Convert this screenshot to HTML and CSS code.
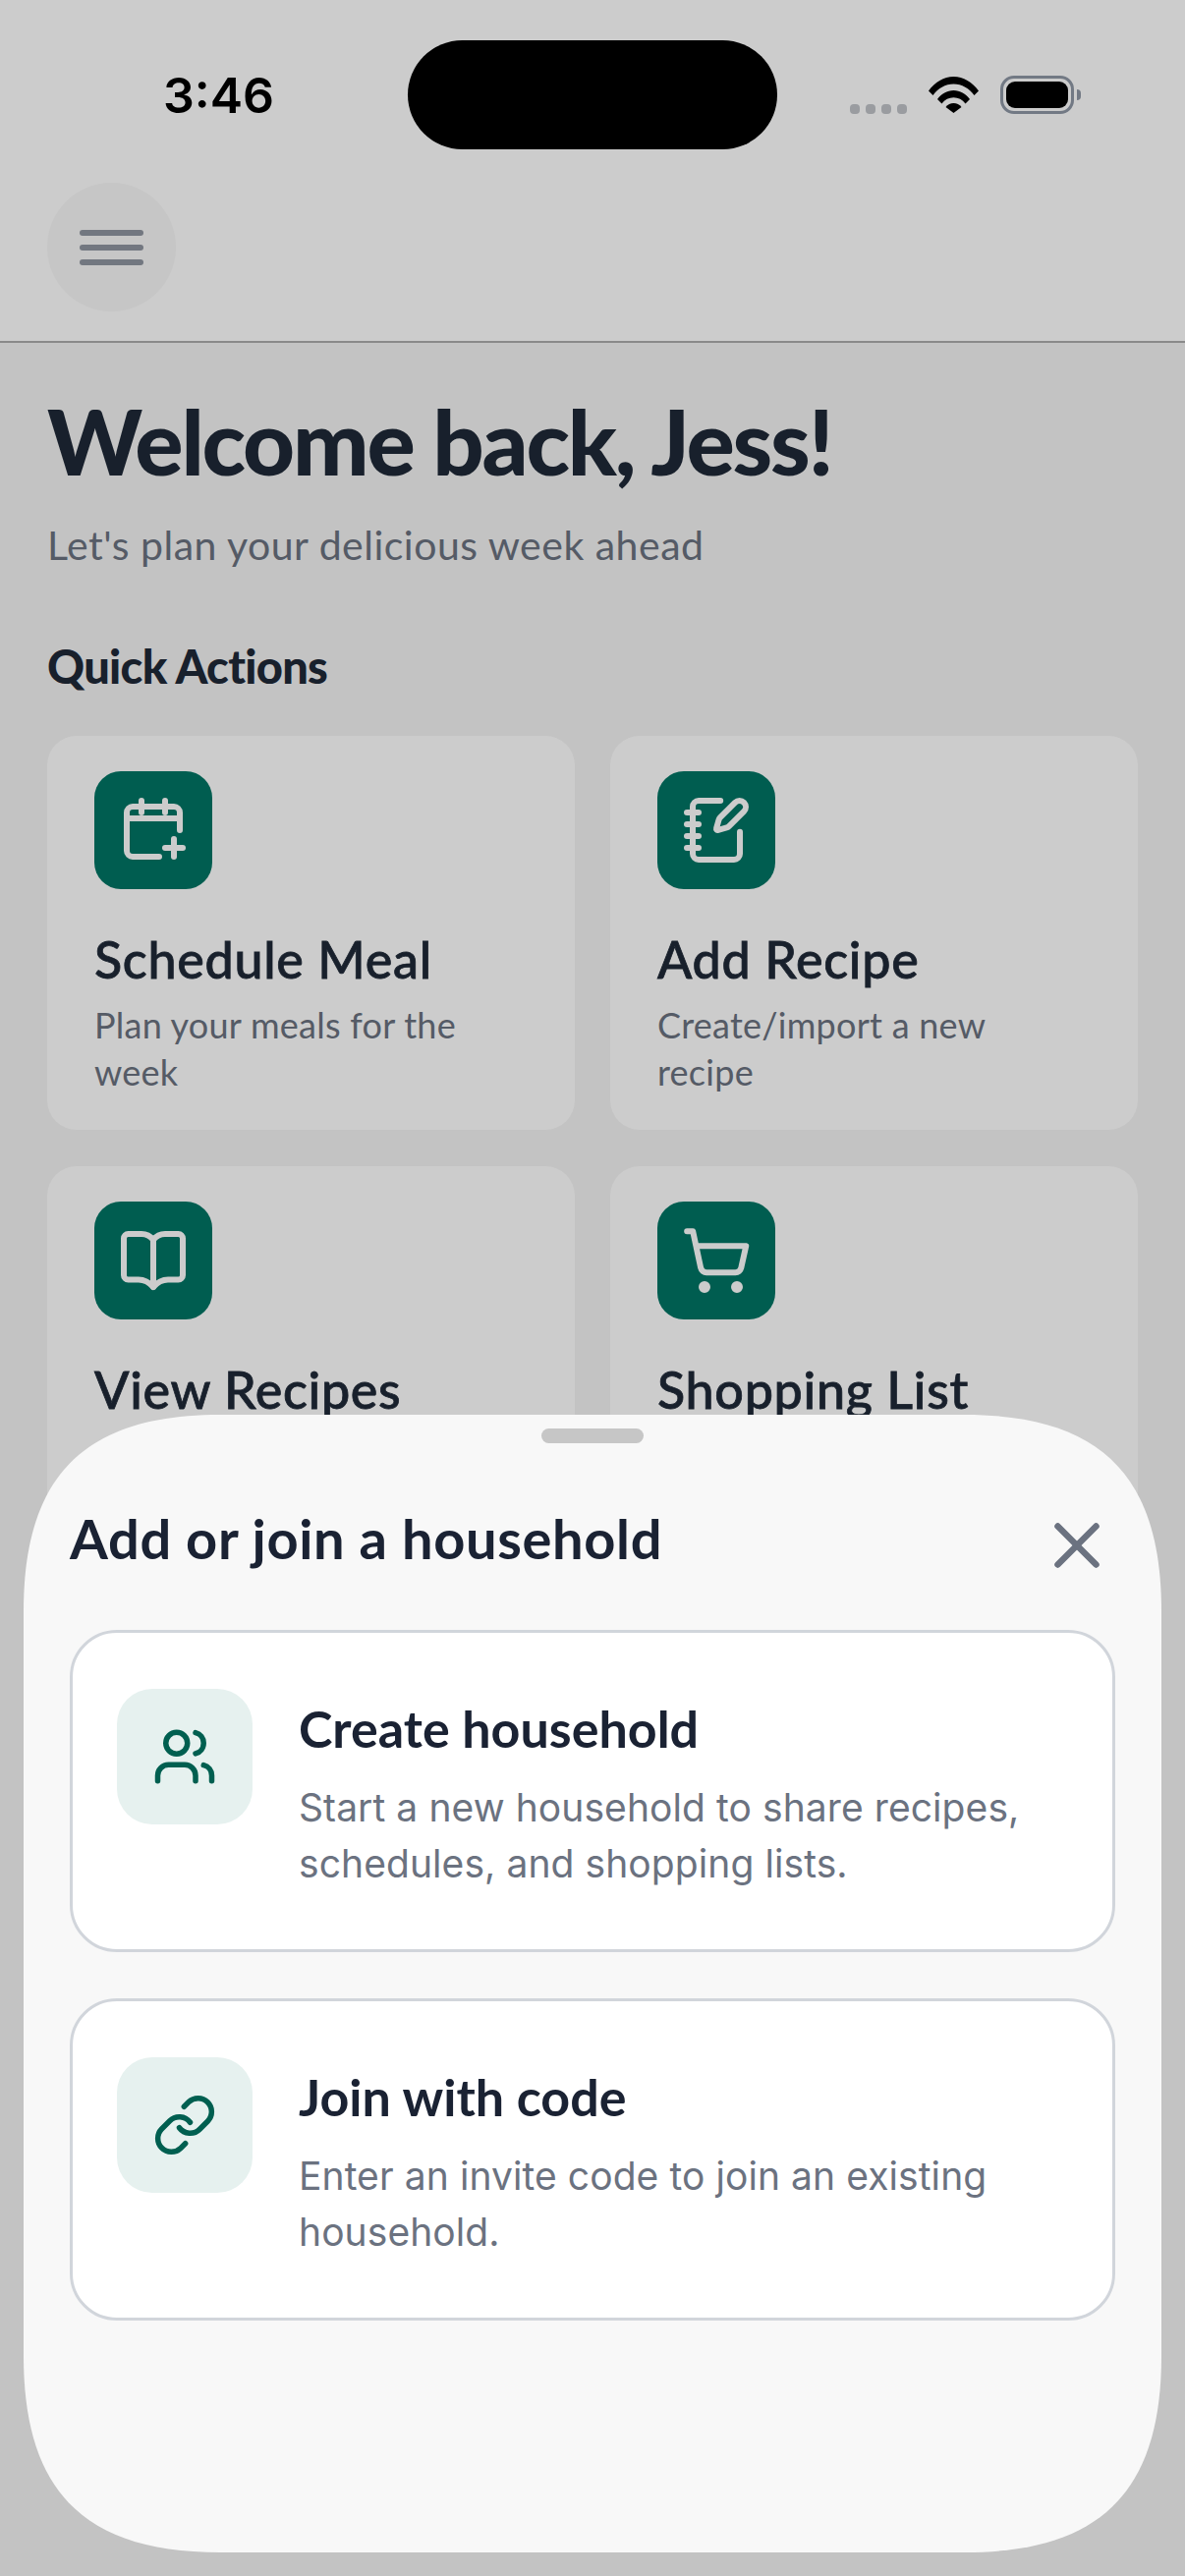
FILE: index.html
```html
<!DOCTYPE html>
<html lang="en">
<head>
  <meta charset="UTF-8" />
  <meta name="viewport" content="width=device-width, initial-scale=1.0"/>
  <title>Welcome back</title>
  <link rel="stylesheet" href="styles.css">
</head>
<body>
  <div class="phone">
    <header class="topbar">
      <div class="statusbar">
        <div class="time">3:46</div>
        <div class="island"></div>
        <div class="status-icons">
          <div class="signal"><span></span><span></span><span></span><span></span></div>
          <svg class="wifi" viewBox="0 0 51 37"><path d="M0 14.500C6.500 5.500 15.500 0 25.500 0S44.500 5.500 51 14.500L46.500 19C41.500 12 34 7.500 25.500 7.500S9.500 12 4.500 19Z"/><path d="M9 23C13 17.500 19 14 25.500 14S38 17.500 42 23L37.500 27.500C34.500 23.500 30.300 21.300 25.500 21.300S16.500 23.500 13.500 27.500Z"/><path d="M17.500 31C19.500 28.500 22.300 27 25.500 27S31.500 28.500 33.500 31L25.500 37Z"/></svg>
          <div class="battery"><div class="battery-fill"></div></div>
          <div class="battery-cap"></div>
        </div>
      </div>
      <button class="menu-btn"><span></span><span></span><span></span></button>
    </header>

    <main class="content">
      <h1>Welcome back, Jess!</h1>
      <p class="subtitle">Let's plan your delicious week ahead</p>
      <h2>Quick Actions</h2>
      <div class="actions">
        <div class="action-card">
          <div class="action-icon">
            <svg class="icon" viewBox="0 0 24 24"><path d="M16 2v4"/><path d="M21 12V6a2 2 0 0 0-2-2H5a2 2 0 0 0-2 2v13a2 2 0 0 0 2 2h9"/><path d="M3 8h18"/><path d="M8 2v4"/><path d="M16 18h6"/><path d="M19 15v6"/></svg>
          </div>
          <div class="action-title">Schedule Meal</div>
          <div class="action-desc">Plan your meals for the week</div>
        </div>
        <div class="action-card">
          <div class="action-icon">
            <svg class="icon" viewBox="0 0 24 24"><path d="M13.400 2H6a2 2 0 0 0-2 2v16a2 2 0 0 0 2 2h12a2 2 0 0 0 2-2v-7.400"/><path d="M2 6h4"/><path d="M2 10h4"/><path d="M2 14h4"/><path d="M2 18h4"/><path d="M21.378 5.626a1 1 0 1 0-3.004-3.004l-5.010 5.012a2 2 0 0 0-.506.854l-.837 2.870a.5.5 0 0 0 .620.620l2.870-.837a2 2 0 0 0 .854-.506z"/></svg>
          </div>
          <div class="action-title">Add Recipe</div>
          <div class="action-desc">Create/import a new recipe</div>
        </div>
        <div class="action-card">
          <div class="action-icon">
            <svg class="icon" viewBox="0 0 24 24"><path d="M12 5v16"/><path d="M12 5C11 3.700 9.500 3 8 3H3.500A1.500 1.500 0 0 0 2 4.500V17a1.500 1.500 0 0 0 1.500 1.500H7c2 0 3.500.8 5 2.500 1.500-1.700 3-2.500 5-2.500h3.500A1.500 1.500 0 0 0 22 17V4.500A1.500 1.500 0 0 0 20.500 3H16c-1.500 0-3 .7-4 2z"/></svg>
          </div>
          <div class="action-title">View Recipes</div>
        </div>
        <div class="action-card">
          <div class="action-icon">
            <svg class="icon" viewBox="0 0 24 24"><circle cx="8" cy="21" r="1"/><circle cx="19" cy="21" r="1"/><path d="M2.050 2.050h2l2.660 12.420a2 2 0 0 0 2 1.580h9.780a2 2 0 0 0 1.950-1.570l1.650-7.430H5.120"/></svg>
          </div>
          <div class="action-title">Shopping List</div>
        </div>
      </div>
    </main>

    <!-- dimmed backdrop + bottom sheet -->
    <div class="scrim"></div>
    <section class="sheet">
      <div class="handle"></div>
      <div class="sheet-header">
        <div class="sheet-title">Add or join a household</div>
        <svg class="close" viewBox="0 0 24 24"><path d="M18 6 6 18"/><path d="m6 6 12 12"/></svg>
      </div>
      <div class="option">
        <div class="option-icon">
          <svg class="icon" viewBox="0 0 24 24"><path d="M16 21v-2a4 4 0 0 0-4-4H6a4 4 0 0 0-4 4v2"/><path d="M16 3.128a4 4 0 0 1 0 7.744"/><path d="M22 21v-2a4 4 0 0 0-3-3.870"/><circle cx="9" cy="7" r="4"/></svg>
        </div>
        <div class="option-text">
          <div class="option-title">Create household</div>
          <div class="option-desc">Start a new household to share recipes, schedules, and shopping lists.</div>
        </div>
      </div>
      <div class="option">
        <div class="option-icon">
          <svg class="icon" viewBox="0 0 24 24"><path d="M10 13a5 5 0 0 0 7.540.540l3-3a5 5 0 0 0-7.070-7.070l-1.720 1.710"/><path d="M14 11a5 5 0 0 0-7.540-.540l-3 3a5 5 0 0 0 7.070 7.070l1.710-1.710"/></svg>
        </div>
        <div class="option-text">
          <div class="option-title">Join with code</div>
          <div class="option-desc">Enter an invite code to join an existing household.</div>
        </div>
      </div>
    </section>
  </div>
</body>
</html>
```

FILE: styles.css
```css
* {
  box-sizing: border-box;
}

body {
  margin: 0;
  font-family: 'Lato', 'Noto Sans', sans-serif;
  color: #1f2937;
}

.phone {
  position: relative;
  width: 1206px;
  height: 2622px;
  overflow: hidden;
  background: #f4f4f4;
}

/* top bar */
.topbar {
  height: 349px;
  padding-top: 41px;
  background: #fff;
  border-bottom: 2px solid #adadad;
}

.statusbar {
  display: grid;
  grid-template-columns: 415px 376px 1fr;
  align-items: center;
  height: 111px;
}

.time {
  padding-left: 166px;
  font-family: 'Inter', sans-serif;
  font-size: 50px;
  font-weight: 600;
  color: #000;
}

.island {
  height: 111px;
  border-radius: 56px;
  background: #000;
}

.status-icons {
  display: flex;
  align-items: center;
  padding-left: 74px;
}

.signal {
  display: flex;
  gap: 6px;
  margin-top: 28px;
}

.signal span {
  width: 10px;
  height: 10px;
  border-radius: 4px;
  background: #c1c4c9;
}

.wifi {
  width: 51px;
  height: 37px;
  margin-left: 22px;
  fill: #000;
}

.battery {
  width: 75px;
  height: 39px;
  margin-left: 22px;
  padding: 3px;
  border: 3px solid #8f98a6;
  border-radius: 14px;
}

.battery-fill {
  height: 100%;
  border-radius: 9px;
  background: #000;
}

.battery-cap {
  width: 4px;
  height: 11px;
  margin-left: 3px;
  border-radius: 0 4px 4px 0;
  background: #8f98a6;
}

.menu-btn {
  display: flex;
  flex-direction: column;
  justify-content: center;
  gap: 9px;
  width: 131px;
  height: 131px;
  margin: 34px 0 0 48px;
  padding: 0 33px;
  border: none;
  border-radius: 50%;
  background: #f8f8f8;
}

.menu-btn span {
  display: block;
  height: 6px;
  border-radius: 3px;
  background: #8f95a0;
}

/* page content */
.content {
  padding: 0 48px;
}

h1 {
  margin: 45px 0 0;
  font-size: 92px;
  line-height: 110px;
  font-weight: 900;
  letter-spacing: -2.2px;
}

.subtitle {
  margin: 23px 0 0;
  font-size: 41px;
  line-height: 56px;
  letter-spacing: 0.5px;
  color: #6b7280;
}

h2 {
  margin: 65px 0 0;
  font-size: 47px;
  line-height: 60px;
  font-weight: 900;
  letter-spacing: -0.7px;
}

.actions {
  display: grid;
  grid-template-columns: 1fr 1fr;
  grid-auto-rows: 401px;
  gap: 37px 36px;
  margin-top: 41px;
}

.action-card {
  padding: 36px 48px;
  border-radius: 30px;
  background: #fff;
}

.action-icon {
  display: flex;
  align-items: center;
  justify-content: center;
  width: 120px;
  height: 120px;
  border-radius: 27px;
  background: #007564;
}

.action-icon .icon {
  width: 72px;
  height: 72px;
  stroke: #fff;
}

.icon,
.close {
  fill: none;
  stroke-width: 2;
  stroke-linecap: round;
  stroke-linejoin: round;
}

.action-title {
  margin-top: 40px;
  font-size: 52px;
  line-height: 62px;
  font-weight: 500;
  letter-spacing: 0.7px;
  -webkit-text-stroke: 0.8px #1f2937;
}

.action-desc {
  margin-top: 12px;
  padding-right: 30px;
  font-size: 36px;
  line-height: 48px;
  letter-spacing: 0.25px;
  color: #6b7280;
}

/* bottom sheet */
.scrim {
  position: absolute;
  inset: 0;
  background: rgba(0, 0, 0, 0.2);
}

.sheet {
  position: absolute;
  left: 24px;
  top: 1440px;
  width: 1158px;
  height: 1158px;
  padding: 14px 47px 0;
  background: #f8f8f8;
  clip-path: path("M0 200C0 62 62 0 200 0H958C1096 0 1158 62 1158 200V958C1158 1096 1096 1158 958 1158H200C62 1158 0 1096 0 958Z");
}

.handle {
  width: 104px;
  height: 15px;
  margin: 0 auto;
  border-radius: 8px;
  background: #c6c6c6;
}

.sheet-header {
  display: flex;
  align-items: center;
  justify-content: space-between;
  margin-top: 65px;
}

.sheet-title {
  padding-bottom: 14px;
  font-size: 56px;
  line-height: 64px;
  font-weight: 700;
  letter-spacing: 0.65px;
  color: #1a2233;
}

.close {
  width: 78px;
  height: 78px;
  stroke: #6b7280;
}

.option {
  display: flex;
  gap: 47px;
  height: 328px;
  margin-top: 47px;
  padding: 57px 45px;
  border: 3px solid #d1d5db;
  border-radius: 48px;
  background: #fff;
}

.option-icon {
  display: flex;
  flex: none;
  align-items: center;
  justify-content: center;
  width: 138px;
  height: 138px;
  border-radius: 36px;
  background: #e6f1ef;
}

.option-icon .icon {
  width: 66px;
  height: 66px;
  stroke: #005f50;
}

.option-text {
  padding-top: 10px;
}

.option-title {
  font-size: 52px;
  line-height: 60px;
  font-weight: 700;
  color: #1a2233;
}

.option-desc {
  margin-top: 22px;
  font-family: 'Inter', sans-serif;
  font-size: 39px;
  line-height: 57px;
  letter-spacing: 0.08px;
  color: #6b7280;
}
```
